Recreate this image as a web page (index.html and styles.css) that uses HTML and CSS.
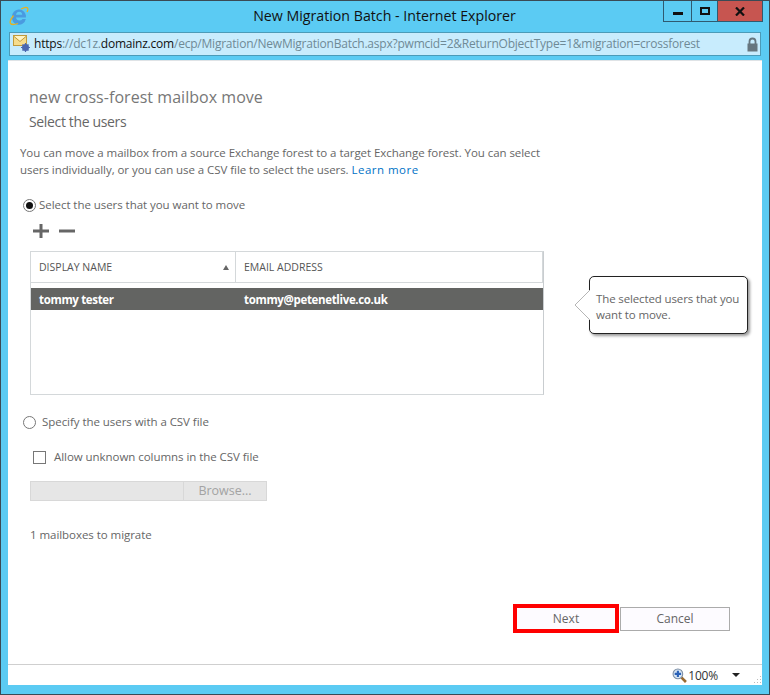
FILE: index.html
```html
<!DOCTYPE html>
<html lang="en">
<head>
<meta charset="utf-8">
<title>New Migration Batch - Internet Explorer</title>
<link rel="stylesheet" href="styles.css">
</head>
<body>
<div class="window">
  <header class="titlebar">
    <svg class="ie-icon" width="20" height="20" viewBox="0 0 20 20">
      <path d="M3 10.500a7 7 0 0 1 13.900-1.200v2.200H7q.5 3 3.400 3 2 0 3.200-1.500h3.200a7 7 0 0 1-13.800-2.500zM7 8.700h6.200Q13 5.800 10.200 5.800 7.500 5.800 7 8.700z" fill="#4a9be0" fill-rule="evenodd"/>
      <path d="M9 17.500Q3 19.500 1.500 17.500 0 15.500 4.500 9.500M12 3Q17 .5 18.500 2 19.500 3.200 18 6" fill="none" stroke="#e8b020" stroke-width="1.300"/>
    </svg>
    <div class="title">New Migration Batch - Internet Explorer</div>
    <div class="controls">
      <div class="ctl ctl-min"><span class="min-glyph"></span></div>
      <div class="ctl ctl-max"><span class="max-glyph"></span></div>
      <div class="ctl ctl-close">
        <svg width="10" height="9" viewBox="0 0 10 9"><path d="M1 .5l8 8M9 .5l-8 8" stroke="#111" stroke-width="2.200" fill="none"/></svg>
      </div>
    </div>
  </header>
  <div class="addressbar">
    <svg class="mail-icon" width="18" height="18" viewBox="0 0 18 18">
      <rect x="0.500" y="0.500" width="13" height="10" fill="#f6dc8c" stroke="#c09a3c"/>
      <path d="M.5 1l6.500 5.500L13.500 1" fill="#fff3c4" stroke="#c09a3c"/>
      <circle cx="12.500" cy="12.500" r="3.500" fill="#4a68b0"/>
      <circle cx="12.500" cy="12.500" r="1.300" fill="#cfd9f0"/>
      <path d="M12.500 8v9M8 12.500h9M9.500 9.500l6 6M15.500 9.500l-6 6" stroke="#4a68b0" stroke-width="1.200"/>
    </svg>
    <div class="url"><span class="url-strong">https</span>://dc1z.<span class="url-strong">domainz.com</span>/ecp/Migration/NewMigrationBatch.aspx?pwmcid=2&amp;ReturnObjectType=1&amp;migration=crossforest</div>
    <svg class="lock" width="11" height="15" viewBox="0 0 11 15">
      <path d="M2.500 7V4.500a3 3 0 0 1 6 0V7" fill="none" stroke="#66767f" stroke-width="1.800"/>
      <rect x="0.500" y="6.500" width="10" height="8" fill="#66767f"/>
    </svg>
  </div>
  <main class="content">
    <div class="page">
      <h1 class="heading">new cross-forest mailbox move</h1>
      <h2 class="subheading">Select the users</h2>
      <p class="intro">You can move a mailbox from a source Exchange forest to a target Exchange forest. You can select users individually, or you can use a CSV file to select the users. <a class="learn" href="#">Learn more</a></p>

      <div class="radio-row">
        <span class="radio radio-on"></span>
        <span class="label">Select the users that you want to move</span>
      </div>
      <div class="toolbar">
        <svg width="16" height="14" viewBox="0 0 16 14"><path d="M8 0v14M0 7h16" stroke="#666" stroke-width="3"/></svg>
        <svg width="16" height="14" viewBox="0 0 16 14"><path d="M0 7h16" stroke="#666" stroke-width="3"/></svg>
      </div>

      <div class="grid-wrap">
        <div class="grid">
          <div class="grid-head">
            <div class="col col-name"><span>DISPLAY NAME</span><span class="sort"></span></div>
            <div class="col col-email">EMAIL ADDRESS</div>
          </div>
          <div class="grid-row">
            <div class="cell-name">tommy tester</div>
            <div class="cell-email">tommy@petenetlive.co.uk</div>
          </div>
        </div>
        <div class="callout">
          <svg class="callout-arrow" width="16" height="30" viewBox="0 0 16 30"><path d="M16 0L1 15l15 15z" fill="#fff"/><path d="M16 0L1 15l15 15" fill="none" stroke="#b5b5b5"/></svg>
          The selected users that you want to move.
        </div>
      </div>

      <div class="radio-row radio-row-csv">
        <span class="radio"></span>
        <span class="label label-csv">Specify the users with a CSV file</span>
      </div>
      <div class="check-row">
        <span class="check"></span>
        <span class="label">Allow unknown columns in the CSV file</span>
      </div>
      <div class="file-row">
        <div class="file-input"></div>
        <div class="file-btn">Browse...</div>
      </div>
      <div class="count">1 mailboxes to migrate</div>
      <div class="actions">
        <div class="btn btn-next">Next</div>
        <div class="btn btn-cancel">Cancel</div>
      </div>
    </div>
    <footer class="statusbar">
      <svg width="15" height="15" viewBox="0 0 14 14">
        <path d="M8.500 8.500l4.500 4.500" stroke="#9a6a30" stroke-width="2.500"/>
        <circle cx="5.500" cy="5.500" r="4.500" fill="#d7e6f5" stroke="#7c8ea4"/>
        <path d="M5.500 2.500v6M2.500 5.500h6" stroke="#2a62b8" stroke-width="2"/>
      </svg>
      <span class="zoom">100%</span>
      <span class="caret"></span>
      <svg class="grip" width="10" height="10" viewBox="0 0 10 10"><path d="M8 1h1v1H8zM5 4h1v1H5zM8 4h1v1H8zM2 7h1v1H2zM5 7h1v1H5zM8 7h1v1H8z" fill="#bbb"/></svg>
    </footer>
  </main>
</div>
</body>
</html>
```
FILE: styles.css
```css
* { box-sizing: border-box; }
html, body { margin: 0; padding: 0; }
body { font-family: "Open Sans", "Noto Sans", "Liberation Sans", sans-serif; color: #666; background: #5bcbf3; }

.window {
  width: 770px;
  height: 695px;
  display: flex;
  flex-direction: column;
  background: #5bcbf3;
  border: 1px solid #3a4a55;
  overflow: hidden;
}

.titlebar {
  height: 31px;
  flex: none;
  display: flex;
  align-items: flex-start;
  position: relative;
}
.ie-icon { margin: 5px 0 0 8px; }
.title {
  position: absolute;
  left: 0;
  right: 0;
  top: 5px;
  text-align: center;
  font-size: 14.200px;
  line-height: 20px;
  color: #111;
  padding-right: 1px;
}
.controls {
  position: absolute;
  right: 6px;
  top: 0;
  display: flex;
  height: 21px;
  border: 1px solid #2f5a70;
  border-top: 0;
}
.ctl { display: flex; align-items: center; justify-content: center; }
.ctl-min { width: 28px; border-right: 1px solid #2f5a70; }
.ctl-max { width: 26px; border-right: 1px solid #2f5a70; }
.ctl-close { width: 44px; background: #c75550; }
.min-glyph { width: 10px; height: 3px; background: #111; margin-top: 5px; }
.max-glyph { width: 10px; height: 8px; border: 2px solid #111; }

.addressbar {
  flex: none;
  height: 24px;
  margin: 0 0 0 8px;
  width: 752px;
  background: #c8ecfd;
  border: 1px solid #4b9bb8;
  display: flex;
  align-items: center;
  position: relative;
}
.mail-icon { flex: none; margin: 0 0 0 3px; }
.url {
  font-size: 12px;
  line-height: 20px;
  color: #6f8a96;
  margin-left: 3px;
  white-space: nowrap;
  letter-spacing: -0.22px;
}
.url-strong { color: #111; }
.lock { position: absolute; right: 2px; top: 4px; }

.content {
  flex: 1;
  margin: 4px 0 9px 7px;
  width: 754px;
  background: #fff;
  border-top: 1px solid #dfe3e6;
  display: flex;
  flex-direction: column;
  min-height: 0;
}
.page { flex: 1; display: flex; flex-direction: column; padding: 0 0 0 12px; min-height: 0; }

.heading {
  font-size: 16px;
  font-weight: 400;
  line-height: 22px;
  color: #777;
  margin: 25px 0 0 9px;
  letter-spacing: 0.04px;
}
.subheading {
  font-size: 14px;
  font-weight: 400;
  line-height: 20px;
  color: #666;
  margin: 4px 0 0 9px;
  letter-spacing: -0.35px;
}
.intro {
  width: 530px;
  font-size: 11.500px;
  line-height: 17px;
  color: #666;
  margin: 12px 0 0;
  letter-spacing: -0.06px;
}
.learn { color: #0072c6; text-decoration: none; letter-spacing: 0.48px; }

.radio-row { display: flex; align-items: center; margin: 18px 0 0 3px; height: 18px; }
.radio {
  flex: none;
  width: 13px;
  height: 13px;
  border: 1px solid #777;
  border-radius: 50%;
  background: #fff;
  position: relative;
  margin-right: 3px;
}
.radio-on::after {
  content: "";
  position: absolute;
  left: 2px;
  top: 2px;
  width: 7px;
  height: 7px;
  border-radius: 50%;
  background: #111;
}
.label { font-size: 11.500px; line-height: 16px; color: #666; letter-spacing: -0.05px; }
.label-csv { margin-left: 3px; }

.toolbar { display: flex; gap: 10px; margin: 9px 0 0 13px; height: 16px; align-items: center; }

.grid-wrap { position: relative; margin: 12px 0 0 10px; }
.grid {
  width: 514px;
  height: 144px;
  border: 1px solid #d4d8da;
  border-right-color: #c9cdd0;
}
.grid-head {
  display: flex;
  height: 31px;
  border-bottom: 1px solid #d4d8da;
  font-size: 10.500px;
  color: #555;
}
.col { display: flex; align-items: center; padding-left: 8px; }
.col-name { width: 205px; border-right: 1px solid #d4d8da; justify-content: space-between; padding-right: 6px; }
.col-email { flex: 1; border-right: 1px solid #d4d8da; }
.sort { width: 0; height: 0; border-left: 3.500px solid transparent; border-right: 3.500px solid transparent; border-bottom: 5px solid #666; }
.grid-row {
  display: flex;
  margin-top: 5px;
  height: 22px;
  background: #636462;
  color: #fff;
  font-size: 11.500px;
  font-weight: 700;
  align-items: center;
  letter-spacing: -0.34px;
}
.cell-name { width: 205px; padding-left: 8px; }
.cell-email { padding-left: 8px; }

.callout {
  position: absolute;
  left: 559px;
  top: 25px;
  width: 159px;
  height: 58px;
  padding: 14px 4px 0 6px;
  background: #fff;
  border: 1px solid #222;
  border-radius: 5px;
  box-shadow: 2px 2px 3px rgba(0,0,0,.4);
  font-size: 11.500px;
  line-height: 16px;
  color: #666;
  letter-spacing: -0.13px;
}
.callout-arrow { position: absolute; left: -16px; top: 13px; }

.radio-row-csv { margin-top: 18px; }
.check-row { display: flex; align-items: center; margin: 18px 0 0 13px; height: 16px; }
.check { flex: none; width: 13px; height: 13px; border: 1px solid #777; background: #fff; margin-right: 8px; }

.file-row { display: flex; margin: 16px 0 0 10px; height: 20px; }
.file-input { width: 154px; background: #e6e6e6; border: 1px solid #d8d8d8; }
.file-btn {
  width: 83px;
  background: #e6e6e6;
  border: 1px solid #d8d8d8;
  border-left: 0;
  color: #a3a3a3;
  font-size: 12.500px;
  line-height: 18px;
  text-align: center;
}
.count { margin: 26px 0 0 10px; font-size: 11.500px; line-height: 16px; color: #666; letter-spacing: -0.05px; }

.actions { display: flex; margin: auto 0 31px 493px; }
.btn {
  height: 24px;
  font-size: 12px;
  line-height: 22px;
  text-align: center;
  color: #666;
  background: #fdfbff;
  border: 1px solid #ababab;
}
.btn-next { width: 106px; height: 29px; line-height: 21px; border: 4px solid #f00; margin-top: -3px; }
.btn-cancel { width: 110px; margin-left: 1px; }

.statusbar {
  flex: none;
  height: 21px;
  background: #fff;
  border-top: 1px solid #cfcfcf;
  display: flex;
  align-items: center;
  justify-content: flex-end;
  position: relative;
  padding-right: 22px;
}
.zoom { font-size: 12px; color: #333; margin-left: 1px; letter-spacing: -0.2px; }
.caret {
  width: 0; height: 0;
  margin-left: 14px;
  border-left: 4px solid transparent;
  border-right: 4px solid transparent;
  border-top: 4px solid #222;
}
.grip { position: absolute; right: 0; bottom: 0; }
```
